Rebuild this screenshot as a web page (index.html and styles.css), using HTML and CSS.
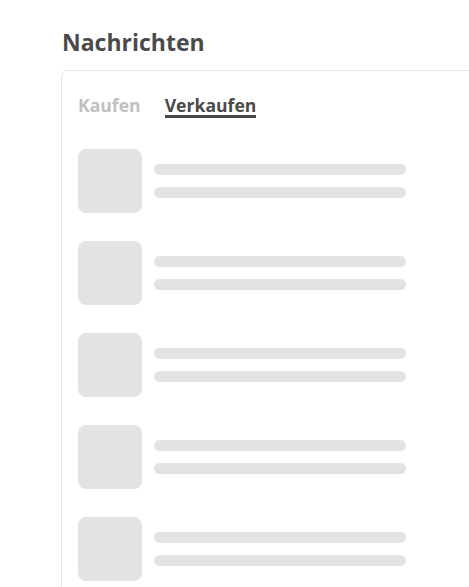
FILE: index.html
```html
<!DOCTYPE html>
<html lang="de">
<head>
<meta charset="utf-8">
<title>Nachrichten</title>
<link rel="stylesheet" href="styles.css">
</head>
<body>
<main class="page">
  <h1 class="title">Nachrichten</h1>
  <section class="card">
    <nav class="tabs">
      <span class="tab">Kaufen</span>
      <span class="tab tab-active">Verkaufen</span>
    </nav>
    <ul class="list">
      <li class="row"><div class="thumb"></div><div class="lines"><div class="bar"></div><div class="bar"></div></div></li>
      <li class="row"><div class="thumb"></div><div class="lines"><div class="bar"></div><div class="bar"></div></div></li>
      <li class="row"><div class="thumb"></div><div class="lines"><div class="bar"></div><div class="bar"></div></div></li>
      <li class="row"><div class="thumb"></div><div class="lines"><div class="bar"></div><div class="bar"></div></div></li>
      <li class="row"><div class="thumb"></div><div class="lines"><div class="bar"></div><div class="bar"></div></div></li>
    </ul>
  </section>
</main>
</body>
</html>
```

FILE: styles.css
```css
html, body {
  margin: 0;
  padding: 0;
  background: #ffffff;
  overflow: hidden;
  height: 100%;
}

.page {
  padding: 27px 0 0 61px;
  font-family: "Open Sans", "Liberation Sans", sans-serif;
}

.title {
  margin: 0 0 13px 1px;
  font-size: 23px;
  line-height: 30px;
  font-weight: 700;
  color: #4a4a4a;
}

.card {
  width: 440px;
  border: 1px solid #e6e6e6;
  border-radius: 6px;
  padding: 24px 16px 0 16px;
  min-height: 600px;
}

.tabs {
  display: flex;
  align-items: flex-start;
  gap: 24px;
}

.tab {
  font-size: 17.6px;
  line-height: 20px;
  font-weight: 700;
  color: #c0c0c0;
}

.tab-active {
  color: #4a4a4a;
  border-bottom: 3px solid #4a4a4a;
}

.list {
  list-style: none;
  margin: 31px 0 0 0;
  padding: 0;
  display: flex;
  flex-direction: column;
  gap: 28px;
}

.row {
  display: flex;
  align-items: center;
  gap: 12px;
}

.thumb {
  width: 64px;
  height: 64px;
  border-radius: 8px;
  background: #e3e3e3;
  flex: none;
}

.lines {
  display: flex;
  flex-direction: column;
  gap: 12px;
}

.bar {
  width: 252px;
  height: 11px;
  border-radius: 6px;
  background: #e3e3e3;
}
```
